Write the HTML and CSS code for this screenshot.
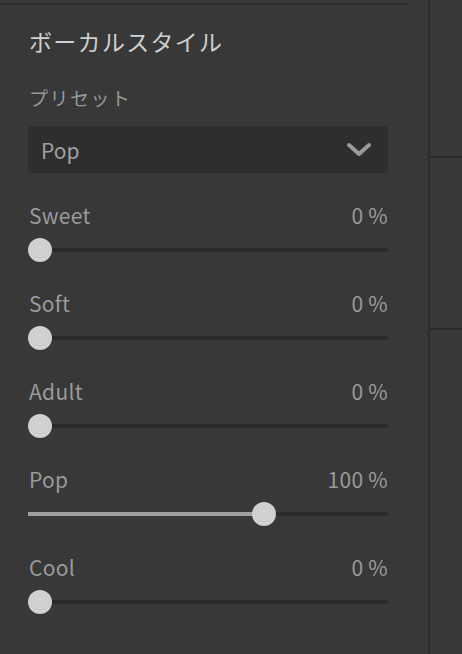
FILE: index.html
```html
<!DOCTYPE html>
<html lang="ja">
<head>
<meta charset="utf-8">
<link rel="stylesheet" href="styles.css">
</head>
<body>
<div class="app">
  <div class="panel">
    <div class="topline"></div>
    <div class="content">
      <h1 class="title">ボーカルスタイル</h1>
      <div class="label">プリセット</div>
      <div class="select">
        <span class="select-value">Pop</span>
        <svg class="chev" width="26" height="16" viewBox="0 0 26 16"><path d="M3 3 L13 12 L23 3" fill="none" stroke="#9a9a9a" stroke-width="4" stroke-linecap="round" stroke-linejoin="round"/></svg>
      </div>
      <div class="row">
        <div class="row-head"><span>Sweet</span><span>0 %</span></div>
        <div class="slider"><div class="fill" style="width:0px"></div><div class="thumb" style="left:0px"></div></div>
      </div>
      <div class="row">
        <div class="row-head"><span>Soft</span><span>0 %</span></div>
        <div class="slider"><div class="fill" style="width:0px"></div><div class="thumb" style="left:0px"></div></div>
      </div>
      <div class="row">
        <div class="row-head"><span>Adult</span><span>0 %</span></div>
        <div class="slider"><div class="fill" style="width:0px"></div><div class="thumb" style="left:0px"></div></div>
      </div>
      <div class="row">
        <div class="row-head"><span>Pop</span><span>100 %</span></div>
        <div class="slider"><div class="fill" style="width:225px"></div><div class="thumb" style="left:224px"></div></div>
      </div>
      <div class="row">
        <div class="row-head"><span>Cool</span><span>0 %</span></div>
        <div class="slider"><div class="fill" style="width:0px"></div><div class="thumb" style="left:0px"></div></div>
      </div>
    </div>
  </div>
  <div class="vdivider"></div>
  <div class="side">
    <div class="side-sec s1"></div>
    <div class="side-sec s2"></div>
    <div class="side-sec s3"></div>
  </div>
</div>
</body>
</html>
```
FILE: styles.css
```css
html, body {
  margin: 0;
  padding: 0;
  background: #383838;
}
body {
  width: 462px;
  height: 654px;
  overflow: hidden;
  font-family: "Noto Sans CJK JP", "Noto Sans", sans-serif;
}
.app {
  display: flex;
  height: 654px;
}
.panel {
  width: 428px;
  flex: none;
}
.topline {
  margin-top: 3px;
  width: 408px;
  height: 2px;
  background: #2b2b2b;
}
.content {
  padding-left: 28px;
  width: 360px;
}
.title {
  margin: 21px 0 0 0;
  font-size: 23px;
  font-weight: 400;
  line-height: 30px;
  height: 30px;
  letter-spacing: 1.3px;
  color: #cfcfcf;
  padding-left: 1px;
}
.label {
  margin-top: 30px;
  font-size: 19px;
  line-height: 24px;
  letter-spacing: 1.5px;
  color: #979797;
  padding-left: 1px;
}
.select {
  margin-top: 16px;
  height: 47px;
  background: #2e2e2e;
  border-radius: 4px;
  display: flex;
  align-items: center;
  justify-content: space-between;
  padding: 0 16px 0 13px;
}
.select-value {
  font-size: 21px;
  color: #a0a0a0;
}
.chev {
  display: block;
}
.row {
  margin-top: 30px;
}
.row + .row {
  margin-top: 29px;
}
.row-head {
  display: flex;
  justify-content: space-between;
  height: 24px;
  line-height: 24px;
  font-size: 21px;
  color: #9a9a9a;
  padding-left: 1px;
  letter-spacing: 0.3px;
}
.slider {
  position: relative;
  margin-top: 11px;
  height: 24px;
}
.slider::before {
  content: "";
  position: absolute;
  left: 0;
  right: 0;
  top: 10px;
  height: 4px;
  background: #2b2b2b;
}
.fill {
  position: absolute;
  left: 0;
  top: 10px;
  height: 4px;
  background: #a0a0a0;
}
.thumb {
  position: absolute;
  top: 0;
  width: 24px;
  height: 24px;
  border-radius: 50%;
  background: #d0d0d0;
}
.vdivider {
  width: 2px;
  flex: none;
  background: #2b2b2b;
}
.side {
  flex: 1;
  display: flex;
  flex-direction: column;
}
.side-sec.s1 {
  height: 156px;
}
.side-sec.s2 {
  height: 170px;
  border-top: 2px solid #2b2b2b;
}
.side-sec.s3 {
  flex: 1;
  border-top: 2px solid #2b2b2b;
}
```
